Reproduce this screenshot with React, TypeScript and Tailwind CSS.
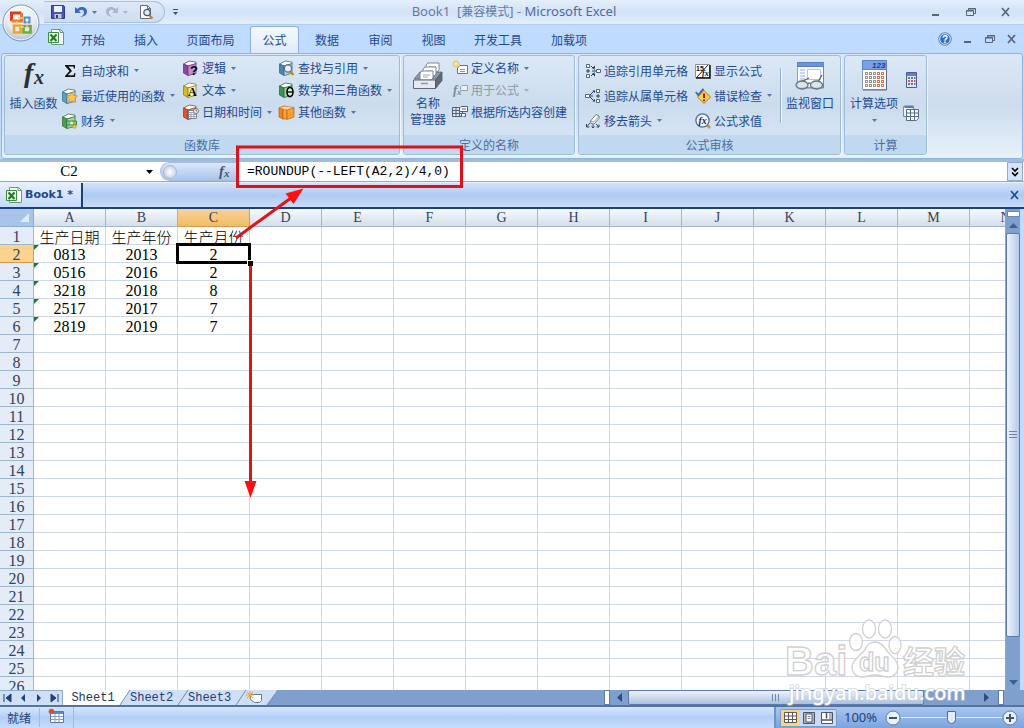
import React, { ReactNode } from "react";

const UI = "font-['Noto_Sans_CJK_SC',sans-serif]";

/* ---------- icons ---------- */

function Svg({ w = 16, h = 16, children, className = "" }: { w?: number; h?: number; children: ReactNode; className?: string }) {
  return (
    <svg width={w} height={h} viewBox={`0 0 ${w} ${h}`} fill="none" aria-hidden="true" className={`block shrink-0 overflow-visible ${className}`}>
      {children}
    </svg>
  );
}

function Caret({ color = "#5776a8" }: { color?: string }) {
  return (
    <Svg w={5} h={3}>
      <path d="M0 0h5L2.5 3z" fill={color} />
    </Svg>
  );
}

function Book({ side, front, line, children }: { side: string; front: string; line: string; children?: ReactNode }) {
  return (
    <Svg>
      <path d="M.5 4L6.500 1l6.500 1.200V4L5 6z" fill="#fff" stroke={line} strokeWidth=".8" />
      <path d="M.5 4L5 6v9.500L.5 13z" fill={side} stroke={line} strokeWidth=".8" />
      <path d="M5 6l8-2.500v9.800L5 15.500z" fill={front} stroke={line} strokeWidth=".8" />
      {children}
    </Svg>
  );
}

const fxFont = { fontFamily: "Liberation Serif, serif", fontStyle: "italic" as const, fontWeight: 700 };

const BigFx = () => (
  <Svg w={32} h={32}>
    <text x="6" y="22" fontSize="28" fill="#2b2f36" style={fxFont}>f</text>
    <text x="16" y="24" fontSize="20" fill="#2b2f36" style={fxFont}>x</text>
  </Svg>
);
const Sigma = () => (
  <Svg>
    <path d="M3 2h10v3.500h-1L11.300 3.500H6.500L10 8l-4.200 4.300h5.700l.9-2.300h1L13 14H3v-1l4.500-5L3 3z" fill="#111" />
  </Svg>
);
const Recent = () => (
  <Book side="#5b9fc4" front="#c3e2ee" line="#3a7396">
    <path d="M10 4l1.700 3.500 3.800.5-2.800 2.600.8 3.900-3.500-1.900L6.600 14.500l.7-3.900L4.500 8l3.800-.5z" fill="#ffc94a" stroke="#d68a16" strokeWidth=".8" />
  </Book>
);
const Finance = () => (
  <Book side="#4e9b55" front="#a8d6a0" line="#33743a">
    <path d="M4.500 8h10v4h-10z" fill="#7cc46a" stroke="#2f7a35" strokeWidth=".8" />
    <circle cx="9.500" cy="10" r="1.500" fill="#e7f7dd" />
    <circle cx="12.500" cy="13.500" r="1.800" fill="#f5c53c" stroke="#b58a18" strokeWidth=".6" />
  </Book>
);
const Logic = () => (
  <Book side="#8a4a9c" front="#c48fd0" line="#6d3580">
    <text x="7" y="15" fontSize="13" fontWeight="700" fill="#000" fontFamily="Liberation Sans">?</text>
  </Book>
);
const TextFn = () => (
  <Book side="#d6b92b" front="#fff08a" line="#93801d">
    <text x="5" y="14" fontSize="12" fontWeight="700" fill="#000" fontFamily="Liberation Serif">A</text>
  </Book>
);
const DateFn = () => (
  <Book side="#d9532c" front="#f3a27c" line="#a63d1c">
    <path d="M5.500 6.500h8v8h-8z" fill="#fff" stroke="#666c78" strokeWidth=".8" />
    <path d="M5.500 8.500h8M5.500 10.500h8M5.500 12.500h8M8 8v6M11 8v6" stroke="#7c8aa3" strokeWidth=".7" />
    <circle cx="13" cy="7" r="2.500" fill="#f4f7fb" stroke="#555e70" strokeWidth=".8" />
    <path d="M13 5.500V7h1.200" stroke="#333" strokeWidth=".7" />
  </Book>
);
const LookupFn = () => (
  <Book side="#4b86ab" front="#b5d6e8" line="#3a6d8f">
    <path d="M11.500 11.500l3 3.500" stroke="#c98522" strokeWidth="2" />
    <circle cx="9" cy="8.500" r="3.600" fill="#e6f3fc" stroke="#5b6f87" strokeWidth="1.200" />
  </Book>
);
const MathFn = () => (
  <Book side="#3f8f56" front="#9fcf9f" line="#2c6e3d">
    <ellipse cx="11" cy="10" rx="3" ry="4.600" fill="#d7ecd7" stroke="#000" strokeWidth="1.600" />
    <path d="M8.500 10h5" stroke="#000" strokeWidth="1.300" />
  </Book>
);
const MoreFn = () => (
  <Svg>
    <path d="M0 4l5-2 3 1-4 2v10l-4-2z" fill="#e8891f" stroke="#b5610b" strokeWidth=".7" />
    <path d="M4 5l4-2 3 1-3 1.500V15H4z" fill="#f6a63d" stroke="#b5610b" strokeWidth=".7" />
    <path d="M8 6l7-2.500V13l-7 2.500z" fill="#ff9f2e" stroke="#b5610b" strokeWidth=".7" />
    <path d="M0 4l5-2 10 1.500L8 6z" fill="#ffd697" stroke="#b5610b" strokeWidth=".5" />
  </Svg>
);
const NameManager = () => (
  <Svg w={32} h={32}>
    <path d="M2 19l6-7h22l-6 7z" fill="#8d98a9" stroke="#5d6878" strokeWidth=".8" />
    {[[14, 3], [11, 7], [8, 11]].map(([x, y]) => (
      <g key={x}>
        <path d={`M${x} ${y + 2}l2-2h11v7l-2 2h-11z`} fill="#fff" stroke="#707b8c" strokeWidth=".9" />
        <path d={`M${x + 3} ${y + 4}h7M${x + 3} ${y + 6}h5`} stroke="#8795aa" strokeWidth=".8" />
      </g>
    ))}
    <path d="M1.500 20h22v8.500h-22z" fill="#e6eaf0" stroke="#5d6878" />
    <path d="M23.500 20l6.500-8v8.500l-6.500 8z" fill="#5f6b7d" stroke="#4d5868" strokeWidth=".8" />
    <path d="M9 23.500h7" stroke="#8c97a8" strokeWidth="1.500" />
  </Svg>
);
const DefineName = () => (
  <Svg>
    <path d="M5.500 8L8 5.500h7.500v8H5.500z" fill="#fff" stroke="#66758e" />
    <path d="M8 9.500h5M8 11.500h5" stroke="#8797b0" />
    <path d="M4 0v8M0 4h8M1.200 1.200l5.600 5.600M6.800 1.200L1.200 6.800" stroke="#f0a820" />
    <circle cx="4" cy="4" r="1.700" fill="#fff2a0" />
  </Svg>
);
const UseInFormula = () => (
  <Svg>
    <text x="1" y="12" fontSize="13" fill="#7f8894" style={fxFont}>f</text>
    <text x="5" y="13" fontSize="9" fill="#7f8894" style={fxFont}>x</text>
    <path d="M8.500 5L10 3.500h5.500v5h-7z" fill="#eef2f7" stroke="#96a2b3" />
  </Svg>
);
const FromSelection = () => (
  <Svg>
    <path d="M.5 3.500h10v9H.5zM.5 6.500h10M.5 9.500h10M4 3.500v9M7.500 3.500v9" fill="#dfe5ee" stroke="#4f5f78" />
    <path d="M7.500 4L9 2.500h6.500v5h-8z" fill="#fff" stroke="#4f5f78" />
    <path d="M10 5h4" stroke="#4f5f78" />
    <path d="M9.500 12V9.500h4v3h-2" fill="#fff" stroke="#4f5f78" />
  </Svg>
);
const TracePrecedents = () => (
  <Svg>
    <path d="M1.500 1.500h3v3h-3zM1.500 11.500h3v3h-3zM11.500 6.500h4v3h-4z" fill="#fff" stroke="#55667f" />
    <path d="M3 6v4M1 8h4M6 3l3.500 3.500M6 13l3.500-3.500M7 8h4" stroke="#2d3f5d" />
    <path d="M7 5.500h3v-3zM7 10.500h3v3z" fill="#1f2f4a" />
  </Svg>
);
const TraceDependents = () => (
  <Svg>
    <path d="M11.500 1.500h3v3h-3zM11.500 11.500h3v3h-3zM.5 6.500h4v3h-4z" fill="#fff" stroke="#55667f" />
    <path d="M13 6v4M11 8h4M5 7l4-4M5 9l4 4M5 8h3" stroke="#2d3f5d" />
    <path d="M7.500 2.500H10V5zM7.500 13.500H10V11z" fill="#1f2f4a" />
  </Svg>
);
const RemoveArrows = () => (
  <Svg>
    <path d="M5.500 8L11 1.500l3 1.500v2.500L9 11 6 10.500z" fill="#fff" stroke="#6e7d94" />
    <path d="M5.500 8l3.200 1L14 3.500" stroke="#6e7d94" strokeWidth=".8" />
    <path d="M5 10l-3.500 4M1.500 11v3h3M8 11.500v3.500M6.500 13.500L8 15l1.500-1.500M11 11l3 3M14 11.500V14h-2.500" stroke="#34486a" />
  </Svg>
);
const ShowFormulas = () => (
  <Svg>
    <path d="M.5 1.500h14v13H.5z" fill="#fff" stroke="#8a93a3" />
    <path d="M15 2v13H1" stroke="#111" strokeWidth="1.500" />
    <path d="M2 14L13 2" stroke="#222" />
    <text x="1" y="8" fontSize="7" fontWeight="700" fill="#111" fontFamily="Liberation Sans">15</text>
    <text x="7" y="13" fontSize="8" fill="#111" style={fxFont}>fx</text>
  </Svg>
);
const ErrorCheck = () => (
  <Svg>
    <path d="M9 2.500L15.500 9 9 15.500 2.500 9z" fill="#ffd24a" stroke="#b57c14" />
    <path d="M9 5.500v4.500M9 11.500v1.800" stroke="#c01b12" strokeWidth="2" />
    <path d="M.8 4l2.500 3L8.500.8" stroke="#3b62b8" strokeWidth="1.800" />
  </Svg>
);
const Evaluate = () => (
  <Svg>
    <path d="M12 12l3 3" stroke="#d9932b" strokeWidth="2.600" />
    <circle cx="7.500" cy="7.500" r="6.600" fill="#eef5fc" stroke="#52719f" strokeWidth="1.300" />
    <text x="3.500" y="11" fontSize="10" fill="#1d2c48" style={fxFont}>fx</text>
  </Svg>
);
const WatchWindow = () => (
  <Svg w={32} h={32}>
    <path d="M3.500 2.500h26v25h-26z" fill="#f7fafe" stroke="#8aa3cb" />
    <path d="M3.500 2.500h26v4h-26z" fill="#6b92dc" stroke="#5a7dc0" />
    <path d="M6 10h5M6 13h5M6 16h5M6 19h5" stroke="#9db1d1" />
    <path d="M13.500 9.500h13v10h-13z" fill="#fff" stroke="#b7c6de" />
    <path d="M29.500 3v25H8" stroke="#6e85ad" />
    <path d="M7 22l8-4M24 22l4-7" stroke="#56606e" strokeWidth="1.300" />
    <ellipse cx="8" cy="25" rx="6" ry="4" fill="#cfe0ea" fillOpacity=".8" stroke="#65717e" strokeWidth="1.300" />
    <ellipse cx="22.500" cy="25" rx="6" ry="4" fill="#cfe0ea" fillOpacity=".8" stroke="#65717e" strokeWidth="1.300" />
    <path d="M14 24c1-1.500 2-1.500 2.600 0" stroke="#65717e" strokeWidth="1.300" />
  </Svg>
);
const CalcOptions = () => (
  <Svg w={32} h={32}>
    <path d="M4.500 1.500h24v28h-24z" fill="#fdfefe" stroke="#8b9dbc" />
    <path d="M4.500.5h24v9h-24z" fill="#78a1e6" stroke="#5a82c8" />
    <text x="14" y="8" fontSize="8" fontStyle="italic" fontWeight="700" fill="#1f3f86" fontFamily="Liberation Sans">123</text>
    {[0, 1, 2, 3].map((r) =>
      [0, 1, 2, 3, 4].map((c) => (
        <rect key={`${r}${c}`} x={7.5 + c * 4} y={12.5 + r * 4} width="2" height="2" fill="#fff" stroke={c > 2 ? "#d47b55" : "#a08f8f"} />
      ))
    )}
    <path d="M28.500 10v20H5" stroke="#5d6b85" />
  </Svg>
);
const CalcNow = () => (
  <Svg>
    <path d="M3.500.5h10v15h-10z" fill="#dfe6f6" stroke="#4c5f91" />
    <path d="M4 1h9v3H4z" fill="#5c80cc" />
    {[6, 9, 12].map((y) => (
      <path key={y} d={`M5 ${y}h2M8 ${y}h2M11 ${y}h1.500`} stroke={y === 9 ? "#b03a4a" : "#4b4f88"} strokeWidth="1.600" />
    ))}
  </Svg>
);
const CalcSheet = () => (
  <Svg>
    <path d="M.5 1.500h10v10H.5z" fill="#eef3fa" stroke="#7c8ba5" />
    <path d="M1.500.5h9v2.500h-9z" fill="#5a7ec6" />
    <path d="M3.500 4.500h12v9l-2 2h-10z" fill="#fff" stroke="#5b6a84" />
    <path d="M3.500 8h12M3.500 11.500h12M7.500 4.500v11M11.500 4.500v11" stroke="#5b6a84" />
  </Svg>
);
const OfficeLogo = () => (
  <Svg w={42} h={40}>
    <defs>
      <radialGradient id="orb" cx=".5" cy=".3" r=".75">
        <stop offset="0" stopColor="#ffffff" />
        <stop offset=".6" stopColor="#e3e8f0" />
        <stop offset="1" stopColor="#a3b2c9" />
      </radialGradient>
    </defs>
    <circle cx="20" cy="21" r="18" fill="url(#orb)" stroke="#7f93b2" />
    <circle cx="20" cy="21" r="16.800" stroke="#fff" strokeOpacity=".8" />
    <path d="M10.500 19V11h10" stroke="#d6401c" strokeWidth="3" />
    <path d="M20.500 11v8h-10" stroke="#ee7a2c" strokeWidth="3" />
    <path d="M23.500 15.500h5v5h-5z" stroke="#4d8fd6" strokeWidth="2" />
    <path d="M13 23.500h6.500v7H13z" stroke="#f3a51e" strokeWidth="2.600" />
    <path d="M22.500 24h7v6.500h-7z" stroke="#6fae35" strokeWidth="2.600" />
    <path d="M17 16h5M16 19v4M19 25h4M26 20v5" stroke="#f9d080" strokeWidth="1.300" />
  </Svg>
);
const XlsIcon = () => (
  <Svg>
    <path d="M3.500.5h9l3 3v12h-12z" fill="#fff" stroke="#6b9a6b" />
    <path d="M12 .5v3h3.500" stroke="#6b9a6b" />
    <path d="M.5 3.500h10v10H.5z" fill="#e4f4e0" stroke="#3d8c40" />
    <path d="M2.500 5.500l6 6.500M8.500 5.500l-6 6.500" stroke="#1f7a2a" strokeWidth="2" />
  </Svg>
);
const SaveIcon = () => (
  <Svg>
    <path d="M1.500 1.500h12l1 1v12h-13z" fill="#4a55b0" stroke="#2e3788" />
    <path d="M4 2h8v6H4z" fill="#eef1fb" />
    <path d="M4.500 10h7v4.500h-7z" fill="#c5cae0" />
    <path d="M6 11h2v3H6z" fill="#2e3788" />
  </Svg>
);
const UndoIcon = ({ color }: { color: string }) => (
  <Svg w={14} h={14}>
    <path d="M1 2v6h6L5 6c2-2 5-1.500 5 1.500 0 2-1.500 3.500-4 4.500 4-.3 7-2 7-5.500C13 2 7 .5 3.300 4z" fill={color} />
  </Svg>
);
const PreviewIcon = () => (
  <Svg>
    <path d="M2.500 1.500h7l3 3v10h-10z" fill="#fff" stroke="#68707e" />
    <path d="M9.500 1.500v3h3" stroke="#68707e" />
    <path d="M11 11l3.500 3.500" stroke="#b9822f" strokeWidth="2.200" />
    <circle cx="9" cy="8.500" r="3.200" fill="#d8e9f7" stroke="#4b586c" strokeWidth="1.200" />
  </Svg>
);
const MinIcon = () => (
  <Svg w={12} h={12}><path d="M2 9h7" stroke="#56657d" strokeWidth="2" /></Svg>
);
const RestoreIcon = () => (
  <Svg w={12} h={12}>
    <path d="M3.500 4V2.500h7v5H9M1.500 4.500h7v5h-7z" stroke="#56657d" />
    <path d="M1.500 5h7M3.500 3h7" stroke="#56657d" />
  </Svg>
);
const CloseIcon = ({ color = "#56657d" }: { color?: string }) => (
  <Svg w={12} h={12}><path d="M2 2l7 8M9 2l-7 8" stroke={color} strokeWidth="1.700" /></Svg>
);

/* ---------- ribbon parts ---------- */

type Command = { icon: ReactNode; label: string; menu?: boolean; off?: boolean };

function SmallCommand({ icon, label, menu, off, row }: Command & { row: string }) {
  return (
    <button className={`flex items-center gap-[3px] whitespace-nowrap ${row} ${off ? "text-[#8d99ab]" : "text-[#1e4a94]"}`}>
      {icon}
      <span>{label}</span>
      {menu && <span className="ml-0.5"><Caret color={off ? "#a3afc0" : "#5776a8"} /></span>}
    </button>
  );
}

function CommandColumn({ items, loose, className = "" }: { items: Command[]; loose?: boolean; className?: string }) {
  return (
    <div className={`flex shrink-0 flex-col items-start ${loose ? "pt-0.5" : "pt-px"} ${className}`}>
      {items.map((c) => (
        <SmallCommand key={c.label} {...c} row={loose ? "h-[25px]" : "h-[22px]"} />
      ))}
    </div>
  );
}

function BigCommand({ icon, lines, menu, className = "" }: { icon: ReactNode; lines: string[]; menu?: boolean; className?: string }) {
  return (
    <button className={`flex shrink-0 flex-col items-center self-start pt-1 leading-4 text-[#1e4a94] ${className}`}>
      {icon}
      <span className="mt-[3px] flex flex-col items-center">
        {lines.map((l) => <span key={l}>{l}</span>)}
      </span>
      {menu && <span className="mt-2"><Caret /></span>}
    </button>
  );
}

function Group({ title, children, className }: { title: string; children: ReactNode; className: string }) {
  return (
    <section
      aria-label={title}
      className={`flex shrink-0 flex-col rounded-[3px] border border-[#9fbbdc] bg-linear-to-b from-[#dbe8f6] via-[#cbdcee] to-[#dbe9f7] shadow-[1px_1px_0_#eef6fe] ${className}`}
    >
      <div className="flex flex-1">{children}</div>
      <h2 className="h-[19px] rounded-b-[2px] bg-[#c1d8f1] text-center leading-[19px] text-[#4a6d9f]">{title}</h2>
    </section>
  );
}

/* ---------- data ---------- */

const tabs = [
  { label: "开始", w: "w-[54px]" },
  { label: "插入", w: "w-[52px]" },
  { label: "页面布局", w: "w-[77px]" },
  { label: "公式", w: "w-[49px]" },
  { label: "数据", w: "w-[54px]" },
  { label: "审阅", w: "w-[53px]" },
  { label: "视图", w: "w-[53px]" },
  { label: "开发工具", w: "w-[76px]" },
  { label: "加载项", w: "w-[66px]" },
];
const columns = "ABCDEFGHIJKLMN".split("");
const cells: string[][] = [
  ["生产日期", "生产年份", "生产月份"],
  ["0813", "2013", "2"],
  ["0516", "2016", "2"],
  ["3218", "2018", "8"],
  ["2517", "2017", "7"],
  ["2819", "2019", "7"],
];
const rows = Array.from({ length: 26 }, (_, i) => i + 1);

/* ---------- sections ---------- */

function TitleBar() {
  return (
    <header className="flex h-[25px] shrink-0 items-center border-b border-[#b4cfee] bg-linear-to-b from-[#e4effc] via-[#d3e2f6] to-[#e3effc] pl-[44px]">
      <div className="flex h-[22px] items-center rounded-r-full border border-l-0 border-[#a8bfdd] bg-linear-to-b from-[#dde9f8] to-[#cddcf0] pr-2.5 pl-1.5">
        <button aria-label="保存"><SaveIcon /></button>
        <button aria-label="撤销" className="ml-2 flex items-center gap-1"><UndoIcon color="#3c68c4" /><Caret /></button>
        <button aria-label="恢复" className="ml-2 flex items-center gap-1"><span className="-scale-x-100"><UndoIcon color="#a9b8cf" /></span><Caret color="#a9b8cf" /></button>
        <button aria-label="打印预览" className="ml-2.5"><PreviewIcon /></button>
      </div>
      <button aria-label="自定义快速访问工具栏" className="ml-2 flex flex-col items-center gap-0.5">
        <span className="h-px w-[5px] bg-[#33507f]" />
        <Caret color="#33507f" />
      </button>
      <h1 className="flex-1 pr-[80px] text-center font-['Noto_Sans','Noto_Sans_CJK_SC',sans-serif] text-[13px] whitespace-pre text-[#667c9c]">
        {"Book1  ["}<span className="text-[12px]">兼容模式</span>{"] - "}<span className="text-[#4d6d9f]">Microsoft Excel</span>
      </h1>
      <div className="flex gap-[23px] pr-3">
        <button aria-label="最小化"><MinIcon /></button>
        <button aria-label="还原"><RestoreIcon /></button>
        <button aria-label="关闭"><CloseIcon /></button>
      </div>
    </header>
  );
}

function TabRow() {
  return (
    <nav className="flex h-7 shrink-0 items-end bg-[#bfdbff] pl-12">
      <span className="mb-2"><XlsIcon /></span>
      <div role="tablist" className="ml-0.5 flex items-end">
        {tabs.map((t) => (
          <button
            key={t.label}
            role="tab"
            aria-selected={t.label === "公式"}
            className={
              t.label === "公式"
                ? `mx-px h-[27px] rounded-t-[3px] border border-b-0 border-[#8fb0dd] bg-linear-to-b from-[#f5f9fe] to-[#dfeafa] text-[#1e4a94] ${t.w}`
                : `h-[27px] text-[#1e4a94] ${t.w}`
            }
          >
            {t.label}
          </button>
        ))}
      </div>
      <div className="mb-[7px] ml-auto flex items-center gap-[10px] pr-1.5">
        <button aria-label="帮助">
          <Svg w={14} h={14}>
            <circle cx="7" cy="7" r="6.300" fill="#2f6fc9" stroke="#7591bd" />
            <circle cx="7" cy="7" r="5.300" stroke="#dcebfc" />
            <text x="4" y="10.500" fontSize="10" fontWeight="700" fill="#fff" fontFamily="Liberation Sans">?</text>
          </Svg>
        </button>
        <button aria-label="最小化工作簿"><MinIcon /></button>
        <button aria-label="还原工作簿"><RestoreIcon /></button>
        <button aria-label="关闭工作簿"><CloseIcon /></button>
      </div>
    </nav>
  );
}

function Ribbon() {
  return (
    <div className="shrink-0 bg-[#bfdbff] px-px">
      <div className="flex h-[106px] gap-[3px] rounded-[3px] border border-[#8db2e3] bg-linear-to-b from-[#dbe7f5] via-[#cddcee] to-[#e6f3fc] px-0.5 pt-px pb-[3px]">
        <Group title="函数库" className="w-[396px]">
          <BigCommand icon={<BigFx />} lines={["插入函数"]} className="w-[57px]" />
          <CommandColumn
            loose
            className="w-[121px]"
            items={[
              { icon: <Sigma />, label: "自动求和", menu: true },
              { icon: <Recent />, label: "最近使用的函数", menu: true },
              { icon: <Finance />, label: "财务", menu: true },
            ]}
          />
          <CommandColumn
            className="w-24"
            items={[
              { icon: <Logic />, label: "逻辑", menu: true },
              { icon: <TextFn />, label: "文本", menu: true },
              { icon: <DateFn />, label: "日期和时间", menu: true },
            ]}
          />
          <CommandColumn
            items={[
              { icon: <LookupFn />, label: "查找与引用", menu: true },
              { icon: <MathFn />, label: "数学和三角函数", menu: true },
              { icon: <MoreFn />, label: "其他函数", menu: true },
            ]}
          />
        </Group>
        <Group title="定义的名称" className="w-[172px]">
          <BigCommand icon={<NameManager />} lines={["名称", "管理器"]} className="w-12" />
          <CommandColumn
            items={[
              { icon: <DefineName />, label: "定义名称", menu: true },
              { icon: <UseInFormula />, label: "用于公式", menu: true, off: true },
              { icon: <FromSelection />, label: "根据所选内容创建" },
            ]}
          />
        </Group>
        <Group title="公式审核" className="w-[263px]">
          <CommandColumn
            loose
            className="w-[116px] pl-1.5"
            items={[
              { icon: <TracePrecedents />, label: "追踪引用单元格" },
              { icon: <TraceDependents />, label: "追踪从属单元格" },
              { icon: <RemoveArrows />, label: "移去箭头", menu: true },
            ]}
          />
          <CommandColumn
            loose
            className="w-[85px]"
            items={[
              { icon: <ShowFormulas />, label: "显示公式" },
              { icon: <ErrorCheck />, label: "错误检查", menu: true },
              { icon: <Evaluate />, label: "公式求值" },
            ]}
          />
          <div className="my-3 w-0.5 border-r border-l border-r-[#eff6fd] border-l-[#94aed0]" />
          <BigCommand icon={<WatchWindow />} lines={["监视窗口"]} className="w-14" />
        </Group>
        <Group title="计算" className="w-[83px]">
          <BigCommand icon={<CalcOptions />} lines={["计算选项"]} menu className="w-[58px]" />
          <div className="flex flex-col gap-[17px] pt-4">
            <button aria-label="开始计算"><CalcNow /></button>
            <button aria-label="计算工作表"><CalcSheet /></button>
          </div>
        </Group>
      </div>
    </div>
  );
}

function FormulaBar() {
  return (
    <div className="flex h-[23px] shrink-0 border-t-[3px] border-b border-t-[#a3bdd9] border-b-[#8fabd0] bg-white">
      <input
        aria-label="名称框"
        defaultValue="C2"
        className="w-[138px] bg-white text-center font-['Liberation_Serif',serif] text-[15px] text-black outline-none"
      />
      <button aria-label="名称列表" className="flex w-[22px] items-center justify-center"><Svg w={7} h={4}><path d="M0 0h7L3.500 4z" fill="#000" /></Svg></button>
      <div className="flex w-[78px] items-center justify-between rounded-l-full border border-r-0 border-[#a5bfe3] bg-linear-to-b from-[#dbe8f9] to-[#a9c5ec] pr-1.5 pl-0.5">
        <span className="size-3.5 rounded-full border border-[#a9b8cf] bg-radial from-white to-[#b9c6da]" />
        <button aria-label="插入函数">
          <Svg w={14} h={16}>
            <text x="1" y="12" fontSize="15" fill="#4c5666" style={fxFont}>f</text>
            <text x="6" y="13" fontSize="11" fill="#4c5666" style={fxFont}>x</text>
          </Svg>
        </button>
      </div>
      <input
        aria-label="编辑栏"
        defaultValue="=ROUNDUP(--LEFT(A2,2)/4,0)"
        className="min-w-0 flex-1 bg-white pl-[9px] font-['Liberation_Mono',monospace] text-[13px] text-black outline-none"
      />
      <button aria-label="展开编辑栏" className="mr-px flex w-4 items-center justify-center border border-[#8fabd0] bg-[#d5e4f8]">
        <Svg w={8} h={10}><path d="M1 1l3 3 3-3M1 5.500l3 3 3-3" stroke="#000" strokeWidth="1.600" /></Svg>
      </button>
    </div>
  );
}

function WorkbookTab() {
  return (
    <div className="flex h-[27px] shrink-0 items-stretch border-t border-b-2 border-t-[#e6effb] border-b-[#1c4079] bg-linear-to-b from-[#d2e2f8] via-[#aecbf3] to-[#c9ddf9]">
      <button className="flex w-[83px] items-center gap-[3px] border-r-2 border-[#1c4079] bg-linear-to-b from-[#e6f0fd] to-[#c4dafa] pl-1.5 font-['DejaVu_Sans',sans-serif] text-[11px] font-bold whitespace-nowrap text-[#26468a]">
        <XlsIcon />
        <span>Book1 *</span>
      </button>
      <button aria-label="关闭选项卡" className="mr-[3px] ml-auto"><CloseIcon color="#1f4a94" /></button>
    </div>
  );
}

function Grid() {
  const headFont = "font-['Liberation_Serif',serif] font-normal text-[#33425c]";
  return (
    <div className="flex min-h-0 flex-1">
      <div className="min-w-0 flex-1 overflow-hidden bg-white">
        <table className="w-max table-fixed border-separate border-spacing-0">
          <colgroup>
            <col className="w-[34px]" />
            {columns.map((c) => <col key={c} className="w-[72px]" />)}
          </colgroup>
          <thead>
            <tr className="h-[18px]">
              <th aria-label="全选" className="w-[34px] border-r border-b border-[#8fabd0] bg-[#a9c4e9] p-0">
                <Svg w={10} h={10} className="ml-5"><path d="M9 0v9H0z" fill="#dfeafa" /></Svg>
              </th>
              {columns.map((c) => (
                <th
                  key={c}
                  scope="col"
                  className={`w-[72px] min-w-[72px] border-r border-b p-0 text-[14px] leading-[17px] ${headFont} ${c === "C" ? "border-[#d89b48] bg-linear-to-b from-[#f8d29b] to-[#f1bd63]" : "border-[#9eb6ce] bg-linear-to-b from-[#f7fafd] to-[#d5deea]"}`}
                >
                  {c}
                </th>
              ))}
            </tr>
          </thead>
          <tbody>
            {rows.map((r) => (
              <tr key={r} className="h-[18px]">
                <th
                  scope="row"
                  className={`border-r border-b px-0 pt-0.5 pb-0 text-[16px] leading-[15px] ${headFont} ${r === 2 ? "border-[#d89b48] bg-[#fbd38c]" : "border-[#9eb6ce] bg-[#e4ecf7]"}`}
                >
                  {r}
                </th>
                {columns.map((c, i) => {
                  const value = cells[r - 1]?.[i] ?? "";
                  const selected = c === "C" && r === 2;
                  return (
                    <td
                      key={c}
                      className={`relative border-r border-b border-[#d0d7e5] px-0 pt-0.5 pb-0 text-center leading-[15px] whitespace-nowrap text-black ${r === 1 ? "font-['Noto_Sans_CJK_SC',sans-serif] text-[15px] font-light" : "font-['Liberation_Serif',serif] text-[16px]"}`}
                    >
                      {value}
                      {i === 0 && r > 1 && r < 7 && (
                        <Svg w={5} h={5} className="absolute top-0 left-0"><path d="M0 0h5L0 5z" fill="#1b7a2b" /></Svg>
                      )}
                      {selected && (
                        <span className="absolute -inset-0.5 z-10 border-[3px] border-black">
                          <span className="absolute -right-[5px] -bottom-[5px] size-1.5 border-t border-l border-white bg-black" />
                        </span>
                      )}
                    </td>
                  );
                })}
              </tr>
            ))}
          </tbody>
        </table>
      </div>
      <div className="flex w-[15px] shrink-0 flex-col items-center border-l border-[#8aa6cf] bg-[#7f9fcc]">
        <div className="mt-0.5 h-[6px] w-[13px] border border-[#6d88b3] bg-white" />
        <button aria-label="向上滚动" className="flex h-4 items-center"><Svg w={9} h={5}><path d="M0 5h9L4.500 0z" fill="#3d5f98" /></Svg></button>
        <div className="flex w-[14px] flex-1 items-center justify-center rounded-[2px] border border-[#5e7cab] bg-linear-to-r from-[#eef4fc] to-[#b4c9e8]">
          <Svg w={8} h={8}><path d="M0 .5h8M0 3.500h8M0 6.500h8" stroke="#6f87ad" /></Svg>
        </div>
        <button aria-label="向下滚动" className="mt-[37px] flex h-4 items-center"><Svg w={9} h={5}><path d="M0 0h9L4.500 5z" fill="#3d5f98" /></Svg></button>
      </div>
      <div className="w-1 shrink-0 bg-[#bfdbff]" />
    </div>
  );
}

function SheetBar() {
  const nav = ["M1 0v8M8 0v8L3 4z", "M6 0v8L2 4z", "M3 0v8l4-4z", "M1 0v8l5-4zM8 0v8"];
  const names = ["第一张", "上一张", "下一张", "最后一张"];
  return (
    <div className="flex h-[17px] shrink-0 border-b-2 border-[#54749f] bg-[#7f9fcc] font-['Liberation_Mono',monospace] text-[12px] leading-[17px] text-[#1e3f7a]">
      <div className="flex w-[63px] items-center justify-around border-t border-r border-[#8fabd0] bg-[#cfe0f6]">
        {nav.map((d, i) => (
          <button key={d} aria-label={names[i]}><Svg w={9} h={8}><path d={d} fill="#1f3f7f" stroke="#1f3f7f" strokeWidth={i % 3 ? 0 : 1} /></Svg></button>
        ))}
      </div>
      <div role="tablist" className="flex">
        <button role="tab" aria-selected="true" className="w-[57px] bg-white pl-[3px] text-[#26364f]">Sheet1</button>
        {["Sheet2", "Sheet3"].map((s) => (
          <button key={s} role="tab" aria-selected="false" className="flex w-[58px] items-stretch bg-[#cfe0f6]">
            <Svg w={10} h={15}><path d="M0 0h10L0 15z" fill={s === "Sheet2" ? "#fff" : "#cfe0f6"} /><path d="M10 0L0 15" stroke="#6d8cbb" /></Svg>
            <span>{s}</span>
          </button>
        ))}
      </div>
      <button aria-label="插入工作表" className="flex">
        <Svg w={44} h={15}>
          <path d="M0 0h42L31 15H0z" fill="#cfe0f6" />
          <path d="M10 0L0 15M42 0L31 15" stroke="#6d8cbb" />
          <path d="M14.500 4.500h11v6l-2 2h-5l-4-3z" fill="#fff" stroke="#6c7890" />
          <path d="M14 1v8M10 5h8M11 2l6 6M17 2l-6 6" stroke="#e8a52a" />
        </Svg>
      </button>
      <div className="ml-auto flex w-[420px] items-stretch">
        <span className="w-1.5 border border-[#5e7cab] bg-white" />
        <button aria-label="向左滚动" className="flex w-[18px] items-center justify-center"><Svg w={5} h={9}><path d="M5 0v9L0 4.500z" fill="#2b4c86" /></Svg></button>
        <div className="flex w-[296px] items-center justify-center rounded-[2px] border border-[#5e7cab] bg-linear-to-b from-[#eef4fc] to-[#a9c0e0]">
          <Svg w={8} h={7}><path d="M.5 0v7M3.500 0v7M6.500 0v7" stroke="#6f87ad" /></Svg>
        </div>
        <button aria-label="向右滚动" className="mr-[9px] ml-auto"><Svg w={5} h={9}><path d="M0 0v9l5-4.500z" fill="#2b4c86" /></Svg></button>
        <span className="mr-[20px] w-1.5 border border-[#5e7cab] bg-white" />
      </div>
    </div>
  );
}

function StatusBar() {
  return (
    <footer className="flex h-[21px] shrink-0 items-center bg-linear-to-b from-[#d6e6fc] via-[#b2cff7] to-[#c9defb] text-[#1e3f7a]">
      <span className="w-10 border-r border-[#9dbbe5] pl-[7px] leading-[19px]">就绪</span>
      <button aria-label="录制宏" className="flex h-full w-[34px] items-center border-r border-[#9dbbe5] pb-1 pl-2">
        <Svg>
          <path d="M2.500 3.500h13v11h-13z" fill="#fff" stroke="#5a75a8" />
          <path d="M3 4h12v2H3z" fill="#5c87d0" />
          <path d="M3 8.500h12M3 11.500h12M7 6v8M11 6v8" stroke="#8ca0c5" />
          <circle cx="3.500" cy="3.500" r="2.800" fill="#d9512f" />
        </Svg>
      </button>
      <div className="ml-auto flex h-full items-center border-l-2 border-[#6d93ca] bg-linear-to-b from-[#a9c6f0] to-[#7ba4dd] pr-1.5 pl-1">
        <div className="flex rounded-[2px] border border-[#7b9bcb] bg-[#c7dbf5]">
          <button aria-label="普通视图" className="flex h-4 w-[19px] items-center justify-center bg-[#fbd47d]">
            <Svg w={13} h={11}><path d="M.5.500h12v10H.5zM.5 4h12M.5 7.500h12M4.500.5v10M8.500.5v10" fill="#fff" stroke="#5d5a58" /></Svg>
          </button>
          <button aria-label="页面布局视图" className="flex h-4 w-[18px] items-center justify-center">
            <Svg w={12} h={12}><path d="M.5.500h11v11H.5z" fill="#aeb7c4" stroke="#4c5668" /><path d="M3 2h6v8H3z" fill="#fff" stroke="#4c5668" /><path d="M4.500 4.500h3M4.500 6.500h3" stroke="#7c8798" /></Svg>
          </button>
          <button aria-label="分页预览" className="flex h-4 w-[18px] items-center justify-center">
            <Svg w={12} h={12}><path d="M.5.500h11v11H.5z" fill="#fff" stroke="#4c5668" /><path d="M5.500.500v6M.5 8h11" stroke="#4c5668" strokeWidth="1.500" /><path d="M8 1h3v6H8z" fill="#aeb7c4" /></Svg>
          </button>
        </div>
        <button className="ml-[7px] w-9 text-left font-['Noto_Sans',sans-serif] text-[13px]">100%</button>
        <button aria-label="缩小" className="ml-[5px]">
          <Svg><circle cx="8" cy="8" r="7" fill="#e8f0fa" stroke="#5f7ba8" /><path d="M4 8h8" stroke="#3e516f" strokeWidth="2" /></Svg>
        </button>
        <input
          type="range"
          aria-label="缩放级别"
          min={10}
          max={190}
          defaultValue={100}
          className="h-4 w-[101px] appearance-none bg-[linear-gradient(#dce9fb,#dce9fb)] bg-[length:100%_1px] bg-center bg-no-repeat [&::-webkit-slider-thumb]:h-[13px] [&::-webkit-slider-thumb]:w-[9px] [&::-webkit-slider-thumb]:appearance-none [&::-webkit-slider-thumb]:rounded-b-[5px] [&::-webkit-slider-thumb]:border [&::-webkit-slider-thumb]:border-[#4b6a9c] [&::-webkit-slider-thumb]:bg-[#e3edf9]"
        />
        <button aria-label="放大">
          <Svg><circle cx="8" cy="8" r="7" fill="#e8f0fa" stroke="#5f7ba8" /><path d="M4 8h8M8 4v8" stroke="#3e516f" strokeWidth="2" /></Svg>
        </button>
      </div>
    </footer>
  );
}

function Annotations() {
  return (
    <svg width="480" height="510" viewBox="0 0 480 510" fill="none" aria-hidden="true" className="pointer-events-none absolute top-0 left-0">
      <rect x="237.500" y="147" width="224" height="39.500" stroke="#dd1118" strokeWidth="3" />
      <path d="M236 238L291 198" stroke="#e0141b" strokeWidth="3" />
      <path d="M303.500 188.500L285.500 193.500l8 10.500z" fill="#ff1010" />
      <path d="M250.500 266v218" stroke="#e0141b" strokeWidth="3" />
      <path d="M244.500 481h12l-6 17z" fill="#ff1010" />
    </svg>
  );
}

function Watermark() {
  return (
    <svg width="200" height="96" viewBox="0 0 200 96" aria-hidden="true" className="pointer-events-none absolute right-11 bottom-4">
      <g fill="#fff" fillOpacity=".8" stroke="#d0d0d0" strokeWidth="1.300">
        <text x="5" y="59" fontSize="40" fontWeight="700" fontFamily="Liberation Sans">Bai</text>
        <ellipse cx="76" cy="26" rx="6.500" ry="8.500" />
        <ellipse cx="89" cy="13" rx="6.500" ry="9" />
        <ellipse cx="105" cy="13" rx="6.500" ry="9" />
        <ellipse cx="115" cy="29" rx="6" ry="8.500" />
        <path d="M95 26c-6 0-8 4-11 9-4 5-12 9-12 16 0 6 4 10 10 10 5 0 8-2 13-2s8 2 13 2c6 0 10-4 10-10 0-7-7-11-11-16-3-5-6-9-12-9z" />
        <text x="79" y="55" fontSize="25" fontWeight="700" fontFamily="Liberation Sans">du</text>
        <text x="123" y="57" fontSize="31" fontWeight="700" fontFamily="Noto Sans CJK SC">经验</text>
      </g>
      <text x="9" y="84" fontSize="20" fontWeight="500" fill="#fff" stroke="#bfc6d0" strokeWidth="2" paintOrder="stroke" strokeOpacity=".6" fontFamily="Noto Sans">jingyan.baidu.com</text>
    </svg>
  );
}

export default function App() {
  return (
    <div className={`relative flex h-screen w-full flex-col overflow-hidden bg-[#bfdbff] text-[12px] ${UI}`}>
      <TitleBar />
      <TabRow />
      <Ribbon />
      <FormulaBar />
      <WorkbookTab />
      <Grid />
      <SheetBar />
      <StatusBar />
      <button aria-label="Office 按钮" className="absolute top-0.5 left-px"><OfficeLogo /></button>
      <Annotations />
      <Watermark />
    </div>
  );
}
